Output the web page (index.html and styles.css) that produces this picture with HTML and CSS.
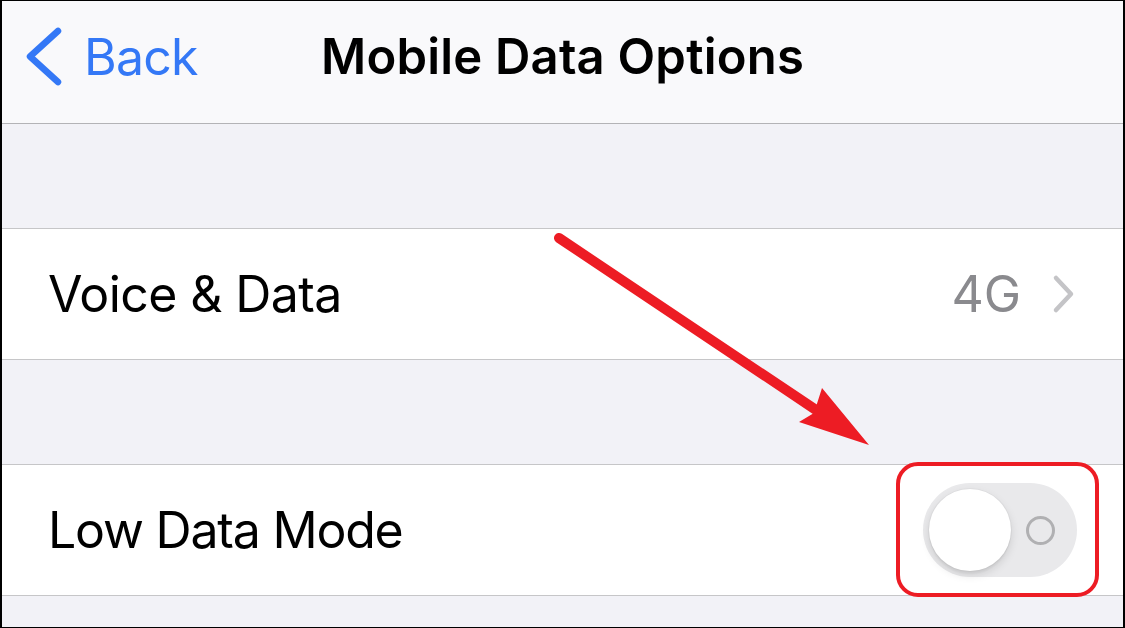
FILE: index.html
```html
<!DOCTYPE html>
<html>
<head>
<meta charset="utf-8">
<link rel="stylesheet" href="styles.css">
</head>
<body>
<div class="frame">
  <header class="nav">
    <div class="back">
      <svg class="back-chev" width="40" height="60" viewBox="0 0 40 60"><path d="M32 4 L4 29.5 L32 55" fill="none" stroke="#3478f6" stroke-width="6.5" stroke-linecap="round" stroke-linejoin="round"/></svg>
      <span class="back-label">Back</span>
    </div>
    <h1 class="title">Mobile Data Options</h1>
    <div></div>
  </header>
  <div class="gap"></div>
  <div class="row">
    <span class="label">Voice &amp; Data</span>
    <div class="detail">
      <span class="value">4G</span>
      <svg class="chev" width="26" height="40" viewBox="0 0 26 40"><path d="M5 4 L20 20 L5 36" fill="none" stroke="#c4c4c7" stroke-width="4.5" stroke-linecap="round" stroke-linejoin="round"/></svg>
    </div>
  </div>
  <div class="gap"></div>
  <div class="row">
    <span class="label label-tight">Low Data Mode</span>
    <div class="switch-wrap">
      <div class="switch">
        <div class="knob"></div>
        <div class="ring"></div>
      </div>
      <div class="highlight"></div>
    </div>
  </div>
  <div class="tail"></div>
  <svg class="arrow" width="1121" height="626" viewBox="2 1 1121 626">
    <line x1="559" y1="238" x2="822" y2="414" stroke="#ed1c24" stroke-width="10" stroke-linecap="round"/>
    <polygon points="869,445 822,388 814,413 799,422" fill="#ed1c24"/>
  </svg>
</div>
</body>
</html>
```

FILE: styles.css
```css
* { box-sizing: border-box; }
html, body { margin: 0; padding: 0; }
body { background: #fff; }
.frame {
  position: relative;
  width: 1125px;
  height: 628px;
  border-style: solid;
  border-color: #000;
  border-width: 1px 2px 1px 2px;
  background: #f2f2f7;
  font-family: Inter, "Noto Sans", "Liberation Sans", sans-serif;
  display: flex;
  flex-direction: column;
  overflow: hidden;
}
.nav {
  height: 123px;
  flex: none;
  background: #f9f9fb;
  border-bottom: 1px solid #b3b3b6;
  display: grid;
  grid-template-columns: 1fr auto 1fr;
  align-items: start;
  padding-top: 31px;
}
.back {
  display: flex;
  align-items: center;
  height: 50px;
  padding-left: 24px;
}
.back-chev { display: block; }
.back-label {
  color: #3478f6;
  font-size: 50px;
  line-height: 50px;
  margin-left: 18px;
  letter-spacing: -0.8px;
}
.title {
  margin: 0;
  font-size: 49px;
  line-height: 50px;
  font-weight: 600;
  color: #000;
  letter-spacing: 0.2px;
}
.gap {
  height: 104px;
  flex: none;
}
.row {
  flex: none;
  height: 132px;
  background: #fff;
  border-top: 1px solid #c6c6c8;
  border-bottom: 1px solid #c6c6c8;
  display: flex;
  align-items: center;
  justify-content: space-between;
  padding: 0 46px 0 46px;
}
.label {
  font-size: 50px;
  line-height: 50px;
  color: #000;
  letter-spacing: -0.6px;
}
.label-tight {
  letter-spacing: -1.2px;
}
.detail {
  display: flex;
  align-items: center;
  gap: 30px;
}
.value {
  font-size: 50px;
  line-height: 50px;
  color: #8a8a8e;
}
.chev { display: block; }
.switch-wrap {
  position: relative;
}
.switch {
  width: 154px;
  height: 94px;
  border-radius: 47px;
  background: #e9e9eb;
  padding: 6px 22px 6px 6px;
  display: flex;
  align-items: center;
  justify-content: space-between;
}
.knob {
  width: 82px;
  height: 82px;
  border-radius: 50%;
  background: #fff;
  box-shadow: 0 4px 10px rgba(0,0,0,0.12), 0 3px 2px rgba(0,0,0,0.04), 0 0 0 1px rgba(0,0,0,0.03);
}
.ring {
  width: 29px;
  height: 29px;
  border-radius: 50%;
  border: 3px solid #b0b0b2;
}
.highlight {
  position: absolute;
  left: -27px;
  right: -22px;
  top: -21px;
  bottom: -20px;
  border: 4px solid #ed1c24;
  border-radius: 22px;
  z-index: 2;
}
.tail {
  flex: 1;
}
.arrow {
  position: absolute;
  left: 0;
  top: 0;
  pointer-events: none;
  z-index: 3;
}
```
